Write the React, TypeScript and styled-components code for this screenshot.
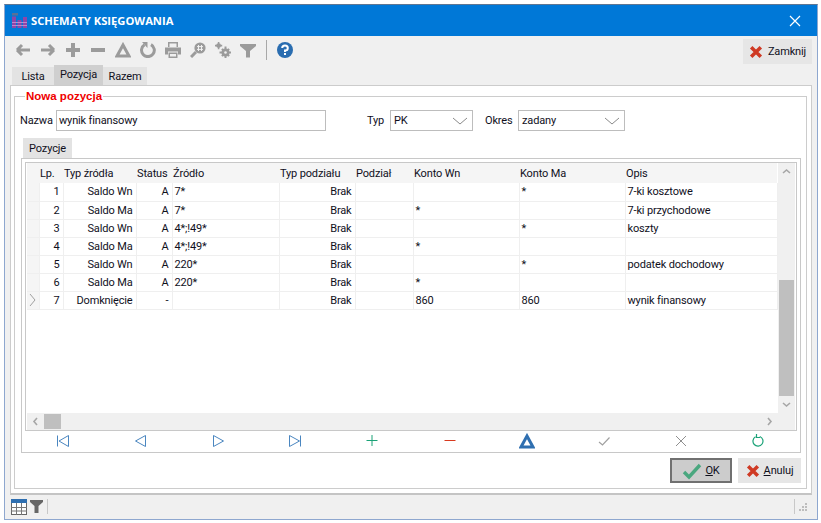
import React from 'react'
import styled, { createGlobalStyle } from 'styled-components'

const GlobalStyle = createGlobalStyle`
  html, body {
    margin: 0;
    padding: 0;
    background: #fff;
  }
  body {
    font-family: Roboto, "Liberation Sans", Arial, sans-serif;
    font-size: 11px;
    letter-spacing: -0.15px;
    color: #10101c;
  }
`

const Window = styled.div`
  box-sizing: border-box;
  width: 814px;
  height: 516px;
  margin: 4px 0 0 4px;
  display: flex;
  flex-direction: column;
  background: #f0f0f0;
  border: 1px solid #8ea7cf;
  border-top-color: #5f7692;
`

const TitleBar = styled.div`
  height: 31px;
  flex: none;
  display: flex;
  align-items: center;
  padding: 0 16px 0 7px;
  gap: 4px;
  background: #0078d7;
  color: #fff;
  font-family: "Open Sans", sans-serif;
  font-weight: 700;
  font-size: 11.2px;
  letter-spacing: 0;
`

const TitleText = styled.span`
  flex: 1;
`

const Toolbar = styled.div`
  height: 29px;
  flex: none;
  display: flex;
  align-items: center;
  padding: 0 5px 2px 5px;
  box-sizing: border-box;
`

const ToolButton = styled.div`
  width: 25px;
  height: 25px;
  display: flex;
  align-items: center;
  justify-content: center;
`

const ToolSeparator = styled.div`
  width: 1px;
  height: 20px;
  margin: 0 5px 0 6px;
  background: #a8a8a8;
`

const CloseButton = styled.div`
  margin-left: auto;
  align-self: flex-start;
  margin-top: 3px;
  width: 69px;
  height: 25px;
  display: flex;
  align-items: center;
  justify-content: center;
  gap: 5px;
  background: #e6e6e6;
`

const Tabs = styled.div`
  height: 20px;
  flex: none;
  display: flex;
  align-items: flex-end;
  padding-left: 7px;
`

const Tab = styled.div<{ $active?: boolean; $width: number }>`
  width: ${p => p.$width}px;
  height: ${p => (p.$active ? 20 : 18)}px;
  box-sizing: border-box;
  display: flex;
  justify-content: center;
  align-items: ${p => (p.$active ? 'flex-start' : 'center')};
  padding-top: ${p => (p.$active ? 3 : 0)}px;
  background: ${p => (p.$active ? '#cfcfcf' : '#e3e3e3')};
`

const Page = styled.div`
  flex: none;
  height: 410px;
  margin: 0 5px;
  padding: 4px 4px 0 3px;
  box-sizing: border-box;
  background: #fff;
  border: 1px solid #cccccc;
  border-bottom: 2px solid #c4c4c4;
`

const Group = styled.fieldset`
  margin: 0;
  padding: 0 6px 0 6px;
  box-sizing: border-box;
  height: 399px;
  border: 1px solid #cccccc;
  min-width: 0;
`

const GroupTitle = styled.legend`
  padding: 0 1px;
  margin-left: 4px;
  color: #f00000;
  font-family: "Liberation Sans", sans-serif;
  font-weight: 700;
  font-size: 11.5px;
  line-height: 12px;
  letter-spacing: 0;
`

const FormRow = styled.div`
  display: flex;
  align-items: center;
  height: 21px;
  margin: 8px 0 0 -1px;
`

const Label = styled.span<{ $width: number; $left?: number }>`
  width: ${p => p.$width}px;
  margin-left: ${p => p.$left ?? 0}px;
  flex: none;
`

const TextInput = styled.div`
  box-sizing: border-box;
  width: 270px;
  height: 21px;
  padding-left: 2px;
  display: flex;
  align-items: center;
  background: #fff;
  border: 1px solid #bdbdbd;
`

const Combo = styled.div<{ $width: number }>`
  box-sizing: border-box;
  width: ${p => p.$width}px;
  height: 21px;
  padding: 0 4px 0 3px;
  display: flex;
  align-items: center;
  justify-content: space-between;
  background: #fff;
  border: 1px solid #bdbdbd;
`

const SubTab = styled.div`
  width: 49px;
  height: 20px;
  margin: 7px 0 0 2px;
  box-sizing: border-box;
  display: flex;
  align-items: center;
  justify-content: center;
  background: #e3e3e3;
`

const SubPanel = styled.div`
  box-sizing: border-box;
  height: 295px;
  width: 780px;
  padding: 3px 3px 0 3px;
  border: 1px solid #c8c8c8;
  display: flex;
  flex-direction: column;
`

const GridFrame = styled.div`
  box-sizing: border-box;
  height: 269px;
  border: 1px solid #c8c8c8;
  display: flex;
  flex-direction: column;
`

const GridMain = styled.div`
  flex: 1;
  display: flex;
  min-height: 0;
`

const Table = styled.table`
  width: 750px;
  height: 0;
  table-layout: fixed;
  border-collapse: collapse;
  flex: none;
  margin-left: 1px;
`

const HeadCell = styled.th`
  height: 20px;
  padding: 0 0 0 1px;
  background: #f5f5f5;
  font-weight: 400;
  text-align: left;
  overflow: hidden;
  white-space: nowrap;
`

const Cell = styled.td<{ $right?: boolean; $marker?: boolean }>`
  box-sizing: border-box;
  height: 18px;
  padding: ${p => (p.$right ? '0 3px 0 0' : '0 0 0 2px')};
  text-align: ${p => (p.$right ? 'right' : 'left')};
  white-space: nowrap;
  overflow: hidden;
  background: ${p => (p.$marker ? '#f5f5f5' : '#fff')};
  border-right: 1px solid #efefef;
  border-bottom: 1px solid #efefef;
`

const VScroll = styled.div`
  width: 17px;
  margin-left: auto;
  margin-right: 1px;
  display: flex;
  flex-direction: column;
  background: #f0f0f0;
`

const VArrow = styled.div`
  height: 17px;
  flex: none;
  display: flex;
  align-items: center;
  justify-content: center;
`

const VTrack = styled.div`
  flex: 1;
  display: flex;
  flex-direction: column;
  justify-content: flex-end;
`

const VThumb = styled.div`
  height: 116px;
  margin: 0 1px;
  background: #bfbfbf;
`

const HScroll = styled.div`
  height: 17px;
  flex: none;
  display: flex;
  align-items: center;
  margin: 0 1px;
  background: #f0f0f0;
`

const HArrow = styled.div`
  width: 17px;
  height: 17px;
  flex: none;
  display: flex;
  align-items: center;
  justify-content: center;
`

const HThumb = styled.div`
  width: 17px;
  height: 15px;
  background: #bfbfbf;
`

const HTrack = styled.div`
  flex: 1;
`

const ScrollCorner = styled.div`
  width: 17px;
  flex: none;
`

const NavBar = styled.div`
  flex: 1;
  display: flex;
  padding-top: 2px;
`

const NavButton = styled.div`
  flex: 1;
  display: flex;
  align-items: flex-start;
  justify-content: center;
`

const Footer = styled.div`
  display: flex;
  justify-content: flex-end;
  gap: 6px;
  margin: 5px 0 0 0;
  width: 780px;
`

const OkButton = styled.div`
  box-sizing: border-box;
  width: 62px;
  height: 25px;
  display: flex;
  align-items: center;
  justify-content: center;
  gap: 3px;
  background: #cccccc;
  border: 2px solid #707070;
`

const CancelButton = styled.div`
  width: 63px;
  height: 25px;
  display: flex;
  align-items: center;
  justify-content: center;
  gap: 4px;
  background: #e6e6e6;
`

const StatusBar = styled.div`
  flex: 1;
  display: flex;
  align-items: center;
  padding: 0 9px 1px 6px;
  gap: 3px;
`

const StatusSeparator = styled.div<{ $right?: boolean }>`
  width: 1px;
  height: 15px;
  background: #c8c8c8;
  margin-left: ${p => (p.$right ? 'auto' : '1px')};
`

const ChevronMark = styled.svg`
  display: block;
  margin-left: -1px;
`

type Row = {
  lp: number
  typ: string
  status: string
  zrodlo: string
  wn: string
  ma: string
  opis: string
}

const rows: Row[] = [
  { lp: 1, typ: 'Saldo Wn', status: 'A', zrodlo: '7*', wn: '', ma: '*', opis: '7-ki kosztowe' },
  { lp: 2, typ: 'Saldo Ma', status: 'A', zrodlo: '7*', wn: '*', ma: '', opis: '7-ki przychodowe' },
  { lp: 3, typ: 'Saldo Wn', status: 'A', zrodlo: '4*;!49*', wn: '', ma: '*', opis: 'koszty' },
  { lp: 4, typ: 'Saldo Ma', status: 'A', zrodlo: '4*;!49*', wn: '*', ma: '', opis: '' },
  { lp: 5, typ: 'Saldo Wn', status: 'A', zrodlo: '220*', wn: '', ma: '*', opis: 'podatek dochodowy' },
  { lp: 6, typ: 'Saldo Ma', status: 'A', zrodlo: '220*', wn: '*', ma: '', opis: '' },
  { lp: 7, typ: 'Domknięcie', status: '-', zrodlo: '', wn: '860', ma: '860', opis: 'wynik finansowy' },
]

const columns = [12, 24, 73, 36, 107, 76, 58, 106, 106, 152]

const Icon = ({ size = 16, children }: { size?: number; children: React.ReactNode }) => (
  <svg width={size} height={size} viewBox="0 0 16 16">
    {children}
  </svg>
)

const gray = '#9b9b9b'
const blue = '#4a86c0'

const toolIcons = [
  <path d="M2 8 L7 3 M2 8 L7 13 M2 8 H15" stroke={gray} strokeWidth="3" fill="none" />,
  <path d="M14 8 L9 3 M14 8 L9 13 M14 8 H1" stroke={gray} strokeWidth="3" fill="none" />,
  <path d="M8 1 V15 M1 8 H15" stroke={gray} strokeWidth="4" fill="none" />,
  <path d="M1 8 H15" stroke={gray} strokeWidth="4" fill="none" />,
  <path d="M8 3 L14 14 H2 Z" stroke={gray} strokeWidth="3" fill="none" />,
  <g>
    <path d="M11 2.6 A6.4 6.4 0 1 1 4.5 2.8" stroke={gray} strokeWidth="3" fill="none" />
    <path d="M2 0 H7.5 V6 Z" fill={gray} />
  </g>,
  <g fill={gray}>
    <path d="M3 0 H13 V5 H11.5 V1.5 H4.5 V5 H3 Z" />
    <path d="M0 5.5 H16 V12.5 H13 V9.5 H3 V12.5 H0 Z" />
    <path d="M3.5 10.5 H12.5 V16 H3.5 Z M5 12 V14.5 H11 V12 Z" fillRule="evenodd" />
  </g>,
  <g>
    <circle cx="10" cy="6" r="5.6" fill={gray} />
    <path d="M6 10 L1 15" stroke={gray} strokeWidth="3" />
    <path d="M8.5 3 V9 M11.5 3 V9 M7 4.6 H13 M7 7.4 H13" stroke="#f0f0f0" strokeWidth="1" />
  </g>,
  <g fill={gray}>
    <circle cx="10.5" cy="10.5" r="4" />
    <path d="M9.5 4.5 h2 v11.5 h-2 Z M4.5 9.5 h11.5 v2 H4.5 Z" />
    <path d="M6.2 7.6 L7.6 6.2 L14.8 13.4 L13.4 14.8 Z M13.4 6.2 L14.8 7.6 L7.6 14.8 L6.2 13.4 Z" />
    <circle cx="10.5" cy="10.5" r="1.3" fill="#f0f0f0" />
    <circle cx="3.6" cy="3.6" r="2.4" />
    <path d="M2.8 0 h1.6 v7.2 H2.8 Z M0 2.8 h7.2 v1.6 H0 Z" />
  </g>,
  <path d="M0 2 H16 V4 L10 9 V15.5 H6 V9 L0 4 Z" fill={gray} />,
]

const navIcons = [
  <path d="M1.5 2.5 V13.5 M12.5 2.5 L3 8 L12.5 13.5 Z" stroke={blue} fill="none" />,
  <path d="M12.5 2.5 L2.5 8 L12.5 13.5 Z" stroke={blue} fill="none" />,
  <path d="M3.5 2.5 L13.5 8 L3.5 13.5 Z" stroke={blue} fill="none" />,
  <path d="M13.5 2.5 V13.5 M2.5 2.5 L12.5 8 L2.5 13.5 Z" stroke={blue} fill="none" />,
  <path d="M8 2 V13 M2.5 7.5 H13.5" stroke="#1aa277" strokeWidth="1" fill="none" />,
  <path d="M2.5 7.5 H13.5" stroke="#d83a1e" strokeWidth="1" fill="none" />,
  <path d="M8 3 L14 14 H2 Z" stroke="#2f6fb0" strokeWidth="3" fill="none" />,
  <path d="M3 9 L6.5 12 L13.5 4.5" stroke="#a0a0a0" strokeWidth="1.2" fill="none" />,
  <path d="M3 3 L13 13 M13 3 L3 13" stroke="#8f8f8f" strokeWidth="1" fill="none" />,
  <path d="M9.8 3.5 A5 5 0 1 1 5.5 3.8 M6.5 1 V4.5 H10 " stroke="#1aa277" strokeWidth="1.2" fill="none" />,
]

const Chevron = ({ dir }: { dir: 'up' | 'down' | 'left' | 'right' }) => {
  const d = {
    up: 'M1 6 L4.5 3 L8 6',
    down: 'M1 3 L4.5 6 L8 3',
    left: 'M6 1 L3 4.5 L6 8',
    right: 'M3 1 L6 4.5 L3 8',
  }[dir]
  return (
    <svg width="9" height="9" viewBox="0 0 9 9">
      <path d={d} stroke="#a6a6a6" strokeWidth="1.6" fill="none" />
    </svg>
  )
}

const ComboArrow = () => (
  <svg width="16" height="8" viewBox="0 0 16 8">
    <path d="M1 1 L8 7 L15 1" stroke="#8a8a8a" fill="none" />
  </svg>
)

const RedCross = () => (
  <Icon size={14}>
    <path d="M2.5 2.5 L13.5 13.5 M13.5 2.5 L2.5 13.5" stroke="#cf3a24" strokeWidth="4" fill="none" />
  </Icon>
)

const AppLogo = () => (
  <svg width="15" height="15" viewBox="0 0 15 15">
    <rect x="0" y="0" width="6" height="2.5" fill="#5a7096" />
    <rect x="0" y="3.5" width="4" height="11.5" fill="#8f45a8" />
    <rect x="5.5" y="7" width="4" height="8" fill="#8f45a8" />
    <rect x="11" y="4" width="4" height="11" fill="#8f45a8" />
    <path d="M0 9.5 H15 M0 12.5 H15" stroke="#c79ad6" strokeWidth="0.8" />
  </svg>
)

export default function App() {
  return (
    <>
      <GlobalStyle />
      <Window>
        <TitleBar>
          <AppLogo />
          <TitleText>SCHEMATY KSIĘGOWANIA</TitleText>
          <svg width="12" height="12" viewBox="0 0 12 12">
            <path d="M1 1 L11 11 M11 1 L1 11" stroke="#fff" strokeWidth="1.2" />
          </svg>
        </TitleBar>

        <Toolbar>
          {toolIcons.map((icon, i) => (
            <ToolButton key={i}>
              <Icon>{icon}</Icon>
            </ToolButton>
          ))}
          <ToolSeparator />
          <ToolButton>
            <svg width="16" height="16" viewBox="0 0 16 16">
              <circle cx="8" cy="8" r="8" fill="#2a6db0" />
              <path d="M5.2 6 A2.8 2.6 0 1 1 8 8.6 V10" stroke="#fff" strokeWidth="2" fill="none" />
              <rect x="7" y="11" width="2" height="2" fill="#fff" />
            </svg>
          </ToolButton>
          <CloseButton>
            <RedCross />
            Zamknij
          </CloseButton>
        </Toolbar>

        <Tabs>
          <Tab $width={42}>Lista</Tab>
          <Tab $width={49} $active>
            Pozycja
          </Tab>
          <Tab $width={44}>Razem</Tab>
        </Tabs>

        <Page>
          <Group>
            <GroupTitle>Nowa pozycja</GroupTitle>
            <FormRow>
              <Label $width={36}>Nazwa</Label>
              <TextInput>wynik finansowy</TextInput>
              <Label $width={23} $left={41}>
                Typ
              </Label>
              <Combo $width={83}>
                PK
                <ComboArrow />
              </Combo>
              <Label $width={33} $left={12}>
                Okres
              </Label>
              <Combo $width={107}>
                zadany
                <ComboArrow />
              </Combo>
            </FormRow>

            <SubTab>Pozycje</SubTab>
            <SubPanel>
              <GridFrame>
                <GridMain>
                  <Table>
                    <colgroup>
                      {columns.map((w, i) => (
                        <col key={i} style={{ width: w }} />
                      ))}
                    </colgroup>
                    <thead>
                      <tr>
                        <HeadCell />
                        <HeadCell>Lp.</HeadCell>
                        <HeadCell>Typ źródła</HeadCell>
                        <HeadCell>Status</HeadCell>
                        <HeadCell>Źródło</HeadCell>
                        <HeadCell>Typ podziału</HeadCell>
                        <HeadCell>Podział</HeadCell>
                        <HeadCell>Konto Wn</HeadCell>
                        <HeadCell>Konto Ma</HeadCell>
                        <HeadCell>Opis</HeadCell>
                      </tr>
                    </thead>
                    <tbody>
                      {rows.map(r => (
                        <tr key={r.lp}>
                          <Cell $marker>
                            {r.lp === 7 && (
                              <ChevronMark width="9" height="14" viewBox="0 0 9 14">
                                <path d="M2 1 L7 7 L2 13" stroke="#a0a0a0" fill="none" />
                              </ChevronMark>
                            )}
                          </Cell>
                          <Cell $right>{r.lp}</Cell>
                          <Cell $right>{r.typ}</Cell>
                          <Cell $right>{r.status}</Cell>
                          <Cell>{r.zrodlo}</Cell>
                          <Cell $right>Brak</Cell>
                          <Cell />
                          <Cell>{r.wn}</Cell>
                          <Cell>{r.ma}</Cell>
                          <Cell>{r.opis}</Cell>
                        </tr>
                      ))}
                    </tbody>
                  </Table>
                  <VScroll>
                    <VArrow>
                      <Chevron dir="up" />
                    </VArrow>
                    <VTrack>
                      <VThumb />
                    </VTrack>
                    <VArrow>
                      <Chevron dir="down" />
                    </VArrow>
                  </VScroll>
                </GridMain>
                <HScroll>
                  <HArrow>
                    <Chevron dir="left" />
                  </HArrow>
                  <HThumb />
                  <HTrack />
                  <HArrow>
                    <Chevron dir="right" />
                  </HArrow>
                  <ScrollCorner />
                </HScroll>
              </GridFrame>
              <NavBar>
                {navIcons.map((icon, i) => (
                  <NavButton key={i}>
                    <Icon>{icon}</Icon>
                  </NavButton>
                ))}
              </NavBar>
            </SubPanel>

            <Footer>
              <OkButton>
                <svg width="20" height="18" viewBox="0 0 20 18">
                  <path d="M2 10 L7 15 L18 3" stroke="#4aa77f" strokeWidth="3.4" fill="none" />
                </svg>
                <span>
                  <u>O</u>K
                </span>
              </OkButton>
              <CancelButton>
                <RedCross />
                <span>
                  <u>A</u>nuluj
                </span>
              </CancelButton>
            </Footer>
          </Group>
        </Page>

        <StatusBar>
          <svg width="16" height="16" viewBox="0 0 16 16">
            <rect x="0.5" y="0.5" width="15" height="15" fill="#fff" stroke="#666" />
            <rect x="0" y="0" width="16" height="4" fill="#2f6fb0" />
            <path d="M0 8.5 H16 M0 12 H16 M5.5 4 V16 M10.5 4 V16" stroke="#777" />
          </svg>
          <svg width="13" height="13" viewBox="0 0 13 13">
            <path d="M0 0 H13 V2 L8.5 6 V13 H4.5 V6 L0 2 Z" fill="#666" />
          </svg>
          <StatusSeparator />
          <StatusSeparator $right />
          <svg width="10" height="10" viewBox="0 0 10 10">
            <path d="M7 1h2v2H7z M4 4h2v2H4z M7 4h2v2H7z M1 7h2v2H1z M4 7h2v2H4z M7 7h2v2H7z" fill="#bdbdbd" />
          </svg>
        </StatusBar>
      </Window>
    </>
  )
}
